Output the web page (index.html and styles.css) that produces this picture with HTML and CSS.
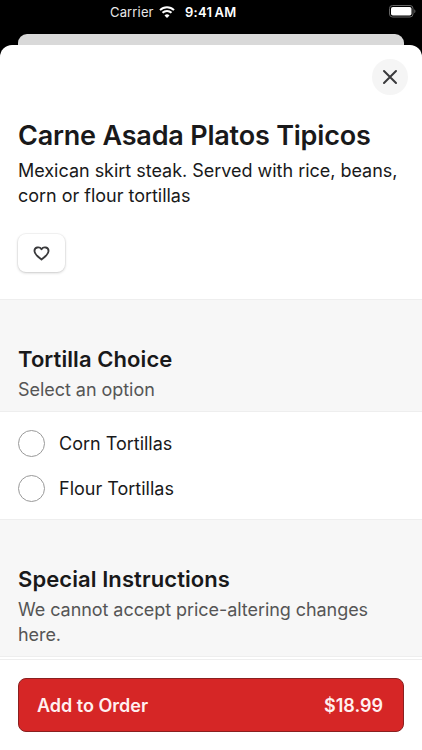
FILE: index.html
```html
<!DOCTYPE html>
<html lang="en">
<head>
<meta charset="utf-8">
<title>Carne Asada Platos Tipicos</title>
<link rel="stylesheet" href="styles.css">
</head>
<body>
<div class="screen">
  <header class="status">
    <span class="carrier">Carrier</span>
    <svg class="wifi" viewBox="0 0 16 12" width="16" height="12"><path d="M1 4.1a10 10 0 0 1 14 0M3.500 6.800a6.400 6.400 0 0 1 9 0" fill="none" stroke="#fff" stroke-width="2"/><path d="M5.500 9.400a3.600 3.600 0 0 1 5 0L8 12z" fill="#fff"/></svg>
    <span class="time">9:41<span class="meridiem">AM</span></span>
    <svg class="battery" viewBox="0 0 27 13" width="27" height="13"><rect x=".5" y=".5" width="23.500" height="11.500" rx="3" fill="none" stroke="#666"/><rect x="2" y="2" width="20.500" height="8.500" rx="1.800" fill="#fff"/><path d="M25.300 4.200v4c1.500-.6 1.500-3.400 0-4z" fill="#666"/></svg>
  </header>
  <div class="behind"></div>
  <main class="sheet">
    <section class="intro">
      <button class="close" aria-label="Close"><svg viewBox="0 0 16 16" width="16" height="16"><path d="M2 2l12 12M14 2L2 14" fill="none" stroke="#3a3a3c" stroke-width="2" stroke-linecap="round"/></svg></button>
      <h1>Carne Asada Platos Tipicos</h1>
      <p class="desc">Mexican skirt steak. Served with rice, beans,<br>corn or flour tortillas</p>
      <button class="fav" aria-label="Favorite"><svg viewBox="0 0 18 16" width="17" height="15"><path d="M9 14.500C6 12 1.500 9 1.500 5.200C1.500 1.400 6.800.1 9 3.400C11.200 .1 16.500 1.400 16.500 5.200C16.500 9 12 12 9 14.500Z" fill="none" stroke="#3a3a3c" stroke-width="2" stroke-linejoin="round"/></svg></button>
    </section>
    <section class="band choice"><h2>Tortilla Choice</h2><p>Select an option</p></section>
    <section class="options">
      <label class="option"><span class="radio"></span><span>Corn Tortillas</span></label>
      <label class="option"><span class="radio"></span><span>Flour Tortillas</span></label>
    </section>
    <section class="band special"><h2>Special Instructions</h2><p>We cannot accept price-altering changes<br>here.</p></section>
    <footer class="footer"><button class="add"><span>Add to Order</span><span>$18.99</span></button></footer>
  </main>
</div>
</body>
</html>
```
FILE: styles.css
```css
* { box-sizing: border-box; }
body { margin: 0; font-family: Inter, sans-serif; color: #19191a; background: #000; }
button { font: inherit; padding: 0; border: 0; }
h1, h2, p { margin: 0; font-weight: 400; white-space: nowrap; }
svg { display: block; }
.screen { width: 422px; height: 750px; overflow: hidden; display: flex; flex-direction: column; }
.status { height: 34px; flex: none; display: flex; align-items: flex-start; color: #fff; font-size: 13px; line-height: 16px; padding: 4px 6px 0 110px; }
.carrier { width: 49px; letter-spacing: .15px; color: #e8e8e8; }
.wifi { margin-top: 2px; }
.time { margin-left: 10px; font-weight: 600; letter-spacing: .3px; }
.meridiem { margin-left: 2px; }
.battery { margin: 1px 0 0 auto; }
.behind { height: 24px; flex: none; margin: 0 18px -13px; background: #d9d9d9; border-radius: 9px 9px 0 0; }
.sheet { flex: 1; background: #fff; border-radius: 12px 12px 0 0; display: flex; flex-direction: column; z-index: 1; }
.intro { height: 254px; padding: 14px 18px 0; display: flex; flex-direction: column; align-items: flex-start; }
.close { width: 36px; height: 36px; border-radius: 50%; background: #f5f5f5; align-self: flex-end; margin-right: -4px; display: grid; place-items: center; }
h1 { font-size: 27px; line-height: 34px; font-weight: 600; margin-top: 24px; letter-spacing: -.2px; }
.desc { font-size: 18px; line-height: 25px; margin-top: 5px; letter-spacing: -.02px; }
.fav { width: 47px; height: 38px; margin-top: 26px; border-radius: 8px; background: #fff; box-shadow: 0 0 0 1px #00000009, 0 1px 3px #00000030; display: grid; place-items: center; }
.band { background: #f7f7f7; border-top: 1px solid #eee; border-bottom: 1px solid #eee; padding: 45px 18px 0; }
.band h2 { font-size: 22px; line-height: 28px; font-weight: 600; letter-spacing: .08px; }
.band p { font-size: 18px; line-height: 25px; color: #555; margin-top: 4px; letter-spacing: -.04px; }
.choice { height: 113px; }
.options { height: 107px; padding: 9px 18px 0; }
.option { height: 45px; display: flex; align-items: center; gap: 14px; font-size: 18px; }
.radio { width: 27px; height: 27px; margin-top: -1px; border: 1px solid #999; border-radius: 50%; }
.special { height: 138px; }
.special p { letter-spacing: -.06px; }
.footer { flex: 1; margin-top: 2px; border-top: 1px solid #eee; padding: 18px 18px 0; background: #fff; }
.add { width: 100%; height: 54px; background: #d62626; color: #fff0f0; border: 1px solid #8a2020; border-radius: 8px; display: flex; justify-content: space-between; align-items: center; padding: 0 20px 0 18px; font-size: 18px; font-weight: 600; }
```
